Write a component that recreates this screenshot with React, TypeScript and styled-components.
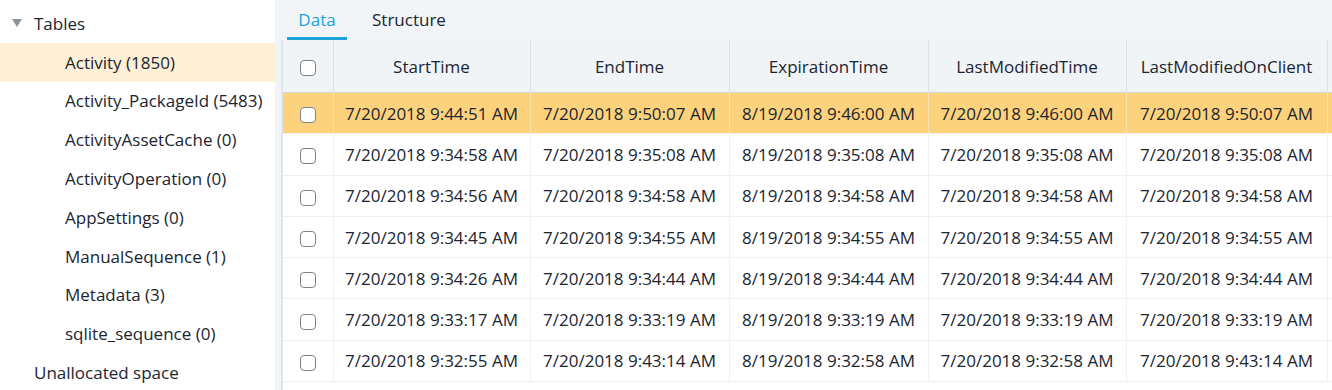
import React from 'react'
import styled, { createGlobalStyle } from 'styled-components'

const GlobalStyle = createGlobalStyle`
  html, body {
    margin: 0;
    padding: 0;
    width: 1332px;
    height: 390px;
    overflow: hidden;
    background: #fff;
    font-family: 'Open Sans', 'Noto Sans', sans-serif;
    color: #1e2832;
  }
`

const tables = [
  'Activity (1850)',
  'Activity_PackageId (5483)',
  'ActivityAssetCache (0)',
  'ActivityOperation (0)',
  'AppSettings (0)',
  'ManualSequence (1)',
  'Metadata (3)',
  'sqlite_sequence (0)',
]

const columns = [
  'StartTime',
  'EndTime',
  'ExpirationTime',
  'LastModifiedTime',
  'LastModifiedOnClient',
  '',
]

const rows = [
  ['7/20/2018 9:44:51 AM', '7/20/2018 9:50:07 AM', '8/19/2018 9:46:00 AM', '7/20/2018 9:46:00 AM', '7/20/2018 9:50:07 AM'],
  ['7/20/2018 9:34:58 AM', '7/20/2018 9:35:08 AM', '8/19/2018 9:35:08 AM', '7/20/2018 9:35:08 AM', '7/20/2018 9:35:08 AM'],
  ['7/20/2018 9:34:56 AM', '7/20/2018 9:34:58 AM', '8/19/2018 9:34:58 AM', '7/20/2018 9:34:58 AM', '7/20/2018 9:34:58 AM'],
  ['7/20/2018 9:34:45 AM', '7/20/2018 9:34:55 AM', '8/19/2018 9:34:55 AM', '7/20/2018 9:34:55 AM', '7/20/2018 9:34:55 AM'],
  ['7/20/2018 9:34:26 AM', '7/20/2018 9:34:44 AM', '8/19/2018 9:34:44 AM', '7/20/2018 9:34:44 AM', '7/20/2018 9:34:44 AM'],
  ['7/20/2018 9:33:17 AM', '7/20/2018 9:33:19 AM', '8/19/2018 9:33:19 AM', '7/20/2018 9:33:19 AM', '7/20/2018 9:33:19 AM'],
  ['7/20/2018 9:32:55 AM', '7/20/2018 9:43:14 AM', '8/19/2018 9:32:58 AM', '7/20/2018 9:32:58 AM', '7/20/2018 9:43:14 AM'],
]

const colWidths = [50, 197, 199, 199, 198, 201, 60]
const tableWidth = colWidths.reduce((a, b) => a + b, 0)

export default function App() {
  return (
    <>
      <GlobalStyle />
      <Layout>
        <Sidebar>
          <GroupRow>
            <Caret />
            Tables
          </GroupRow>
          {tables.map((t, i) => (
            <TableRow key={t} $selected={i === 0}>
              {t}
            </TableRow>
          ))}
          <GroupRow $plain>Unallocated space</GroupRow>
        </Sidebar>
        <Content>
          <TabBar>
            <Tab $active>Data</Tab>
            <Tab>Structure</Tab>
          </TabBar>
          <GridWrap>
            <Grid style={{ width: tableWidth }}>
              <colgroup>
                {colWidths.map((w, i) => (
                  <col key={i} style={{ width: w }} />
                ))}
              </colgroup>
              <thead>
                <tr>
                  <HeadCell>
                    <Check />
                  </HeadCell>
                  {columns.map((c, i) => (
                    <HeadCell key={i}>{c}</HeadCell>
                  ))}
                </tr>
              </thead>
              <tbody>
                {rows.map((r, i) => (
                  <BodyRow key={i} $selected={i === 0}>
                    <Cell>
                      <Check />
                    </Cell>
                    {r.map((v, j) => (
                      <Cell key={j}>{v}</Cell>
                    ))}
                    <Cell />
                  </BodyRow>
                ))}
              </tbody>
            </Grid>
          </GridWrap>
        </Content>
      </Layout>
    </>
  )
}

const Layout = styled.div`
  display: flex;
  width: 1332px;
  height: 390px;
`

const Sidebar = styled.div`
  width: 275px;
  flex: none;
  padding-top: 4px;
  background: #fff;
  font-size: 17px;
`

const GroupRow = styled.div<{ $plain?: boolean }>`
  display: flex;
  align-items: center;
  height: 38.8px;
  padding-left: ${(p) => (p.$plain ? '34px' : '12px')};
  gap: 12px;
  color: #1b2530;
`

const Caret = styled.span`
  width: 0;
  height: 0;
  border-left: 5px solid transparent;
  border-right: 5px solid transparent;
  border-top: 8px solid #8b939c;
`

const TableRow = styled.div<{ $selected?: boolean }>`
  display: flex;
  align-items: center;
  height: 38.8px;
  padding-left: 65px;
  background: ${(p) => (p.$selected ? '#fdf0d6' : 'transparent')};
  color: #1b2530;
  white-space: nowrap;
`

const Content = styled.div`
  flex: 1;
  min-width: 0;
  background: #f2f5f8;
  display: flex;
  flex-direction: column;
  overflow: hidden;
`

const TabBar = styled.div`
  display: flex;
  height: 40px;
  padding-left: 12px;
`

const Tab = styled.div<{ $active?: boolean }>`
  display: flex;
  align-items: center;
  justify-content: center;
  box-sizing: border-box;
  height: 40px;
  padding: 2px 12px 0;
  width: ${(p) => (p.$active ? '60px' : 'auto')};
  margin-right: ${(p) => (p.$active ? '13px' : '0')};
  font-size: 17px;
  color: ${(p) => (p.$active ? '#1ba2d9' : '#1b2530')};
  border-bottom: 3px solid ${(p) => (p.$active ? '#1ba2d9' : 'transparent')};
`

const GridWrap = styled.div`
  margin-left: 6px;
  border-left: 2px solid #dfe5ea;
  flex: 1;
  overflow: hidden;
  background: #fff;
`

const Grid = styled.table`
  border-collapse: collapse;
  table-layout: fixed;
  font-size: 17px;
`

const HeadCell = styled.th`
  height: 52px;
  padding: 0;
  font-weight: 400;
  text-align: center;
  background: #f0f4f7;
  border-right: 1px solid #dbe2e8;
  border-bottom: 1px solid #d3dbe2;
  color: #1b2530;
  white-space: nowrap;
  overflow: hidden;
`

const BodyRow = styled.tr<{ $selected?: boolean }>`
  height: 41.3px;
  background: ${(p) => (p.$selected ? '#fdd27c' : '#fff')};
  & > td {
    border-right: 1px solid ${(p) => (p.$selected ? '#fde3b0' : '#eef1f4')};
  }
`

const Cell = styled.td`
  padding: 0;
  text-align: center;
  border-bottom: 1px solid #eef1f4;
  white-space: nowrap;
  overflow: hidden;
  color: #1b2530;
`

const Check = styled.span`
  display: inline-block;
  box-sizing: border-box;
  width: 16px;
  height: 16px;
  border: 1.5px solid #7b838c;
  border-radius: 4px;
  background: #fff;
  vertical-align: middle;
`
